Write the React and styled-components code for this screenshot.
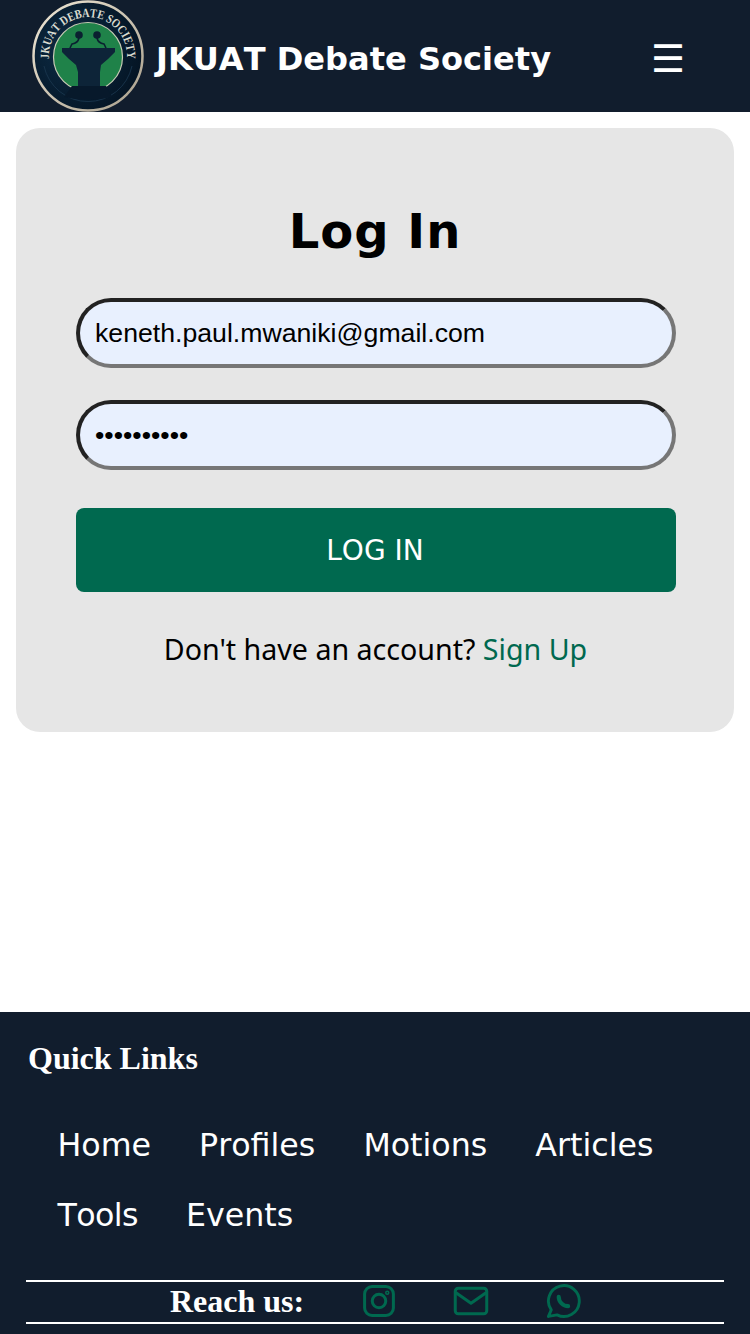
import React from "react";
import styled, { createGlobalStyle } from "styled-components";

const Global = createGlobalStyle`
  html, body { margin: 0; padding: 0; background: #fff; }
  * { box-sizing: border-box; }
  body { font-kerning: none; }
`;
const Page = styled.div`
  width: 750px; height: 1334px; display: flex; flex-direction: column; overflow: hidden;
  font-family: "DejaVu Sans", sans-serif;
`;
const Header = styled.header`
  height: 112px; flex: none; background: #111d2d; display: flex; align-items: center; padding-left: 32px;
`;
const Logo = styled.svg`width: 112px; height: 112px; flex: none;`;
const Brand = styled.h1`
  margin: 6px 0 0 12px; font: bold 32.1px "DejaVu Sans", sans-serif; font-kerning: none; color: #fff; white-space: nowrap;
`;
const Burger = styled.span`
  margin: 6px 65px 0 auto; color: #fff; font-size: 38px; line-height: 1;
`;
const Main = styled.main`flex: 1; padding: 16px;`;
const Card = styled.form`
  height: 604px; background: #e6e6e6; border-radius: 24px; padding: 72px 58px 0 60px;
  display: flex; flex-direction: column;
`;
const Title = styled.h2`
  margin: 0; padding-right: 2px; font: bold 48px/62px "DejaVu Sans", sans-serif; font-kerning: none; letter-spacing: 1px; color: #000; text-align: center;
`;
const Input = styled.input`
  width: 600px; height: 70px; border-width: 4px; border-style: solid; border-color: #222 #767676 #767676 #222;
  border-radius: 35px; background: #e8f0fe; padding: 0 15px;
  font: 26.67px "Liberation Sans", Arial, sans-serif; color: #000; outline: none;
  margin-top: ${p => p.$top}px;
`;
const Button = styled.button`
  width: 600px; height: 84px; margin-top: 38px; border: 0; border-radius: 8px; padding: 0 2px 0 0; background: #00694f; color: #fff;
  font: 28px "DejaVu Sans", sans-serif;
  font-kerning: none;
`;
const Prompt = styled.p`
  margin: 39px 0 0; padding-right: 1px; text-align: center; font: 28.6px/36px "Noto Sans", sans-serif; color: #000;
`;
const SignUp = styled.a`color: #00694f;`;
const Footer = styled.footer`
  height: 322px; flex: none; background: #111d2d; padding: 26px 26px 0; display: flex; flex-direction: column;
`;
const FootTitle = styled.h3`
  margin: 0 0 0 2px; font: bold 32px/40px "Liberation Serif", serif; color: #fff;
`;
const Links = styled.nav`
  display: flex; flex-wrap: wrap; column-gap: 48px; margin-top: 32px; padding-left: 31.5px; height: 170px; align-content: flex-start;
`;
const LinkItem = styled.a`
  font: 31.7px/70px "DejaVu Sans", sans-serif; font-kerning: none; color: #fff;
  letter-spacing: ${p => (p.$tight ? "-0.6px" : "0")};
`;
const Reach = styled.div`
  width: 698px; height: 44px; border-top: 2px solid #fff; border-bottom: 2px solid #fff;
  display: flex; align-items: center; padding: 0 0 2px 144px;
`;
const ReachLabel = styled.strong`
  font: bold 32px "Liberation Serif", serif; color: #fff; width: 191px; flex: none;
`;
const Social = styled.a`
  display: flex; width: 92px; flex: none; color: #00694f;
`;
const Icon = styled.svg`
  width: 36px; height: 36px; fill: none; stroke: currentColor; stroke-width: 2; stroke-linecap: round; stroke-linejoin: round;
`;

export default function App() {
  return (
    <Page>
      <Global />
      <Header>
        <Logo viewBox="0 0 112 112">
          <defs>
            <path id="arc" d="M 20.4 72 A 39 39 0 1 1 91.6 72" />
            <radialGradient id="disc" cx="0.35" cy="0.45" r="0.75">
              <stop offset="0" stopColor="#0d2c46" />
              <stop offset="1" stopColor="#03111f" />
            </radialGradient>
            <linearGradient id="rim" x1="0" y1="0" x2="1" y2="1">
              <stop offset="0" stopColor="#efe7d6" />
              <stop offset="1" stopColor="#a89f8c" />
            </linearGradient>
          </defs>
          <circle cx="56" cy="56" r="54.5" fill="url(#disc)" stroke="url(#rim)" strokeWidth="2.5" />
          <circle cx="56" cy="57" r="34.5" fill="#1f8249" stroke="#c8cbb5" strokeWidth="1.2" />
          <path d="M12 66 A45 45 0 0 0 100 66" fill="none" stroke="#1c3950" strokeWidth="0.8" />
          <circle cx="47" cy="35" r="3.8" fill="#0a2030" />
          <circle cx="65" cy="35" r="3.8" fill="#0a2030" />
          <path d="M47 38 q-1 5 -7 6 l-2 4 M65 38 q1 5 7 6 l2 4" fill="none" stroke="#0a2030" strokeWidth="1.6" />
          <path d="M30 48 H83 V52 L76 59 L69 65 L68 72 V86 H46 V72 L44 65 L37 59 L30 52 Z" fill="#0d2438" />
          <path d="M40 86 H74 L80 97 Q56 102 32 97 Z" fill="#07192b" />
          <text fontFamily="'Liberation Serif', serif" fontSize="12.5" fontWeight="bold" fill="#d9dbd0">
            <textPath href="#arc" startOffset="50%" textAnchor="middle" textLength="128" lengthAdjust="spacingAndGlyphs">JKUAT DEBATE SOCIETY</textPath>
          </text>
        </Logo>
        <Brand>JKUAT Debate Society</Brand>
        <Burger>☰</Burger>
      </Header>
      <Main>
        <Card onSubmit={e => e.preventDefault()}>
          <Title>Log In</Title>
          <Input $top={36} type="email" defaultValue="keneth.paul.mwaniki@gmail.com" />
          <Input $top={32} type="password" defaultValue="1234567890" />
          <Button>LOG IN</Button>
          <Prompt>Don't have an account? <SignUp>Sign Up</SignUp></Prompt>
        </Card>
      </Main>
      <Footer>
        <FootTitle>Quick Links</FootTitle>
        <Links>
          <LinkItem>Home</LinkItem><LinkItem>Profiles</LinkItem><LinkItem>Motions</LinkItem><LinkItem>Articles</LinkItem><LinkItem $tight>Tools</LinkItem><LinkItem>Events</LinkItem>
        </Links>
        <Reach>
          <ReachLabel>Reach us:</ReachLabel>
          <Social>
            <Icon viewBox="0 0 24 24">
              <rect x="2.4" y="2.4" width="19.2" height="19.2" rx="5" />
              <circle cx="12" cy="12" r="4.5" />
              <circle cx="17.5" cy="6.5" r="0.5" />
            </Icon>
          </Social>
          <Social>
            <Icon viewBox="0 0 24 24">
              <rect x="1.5" y="3.5" width="21" height="17" rx="2" />
              <path d="M2 6.5l10 7 10-7" />
            </Icon>
          </Social>
          <Social>
            <Icon viewBox="1 1.5 21 21">
              <path d="M3 21l1.65-3.8a9 9 0 1 1 3.4 2.9L3 21" strokeWidth="1.7" />
              <path d="M9 9.5c0 3 2.5 5.5 5.5 5.5" strokeWidth="2.4" />
            </Icon>
          </Social>
        </Reach>
      </Footer>
    </Page>
  );
}
